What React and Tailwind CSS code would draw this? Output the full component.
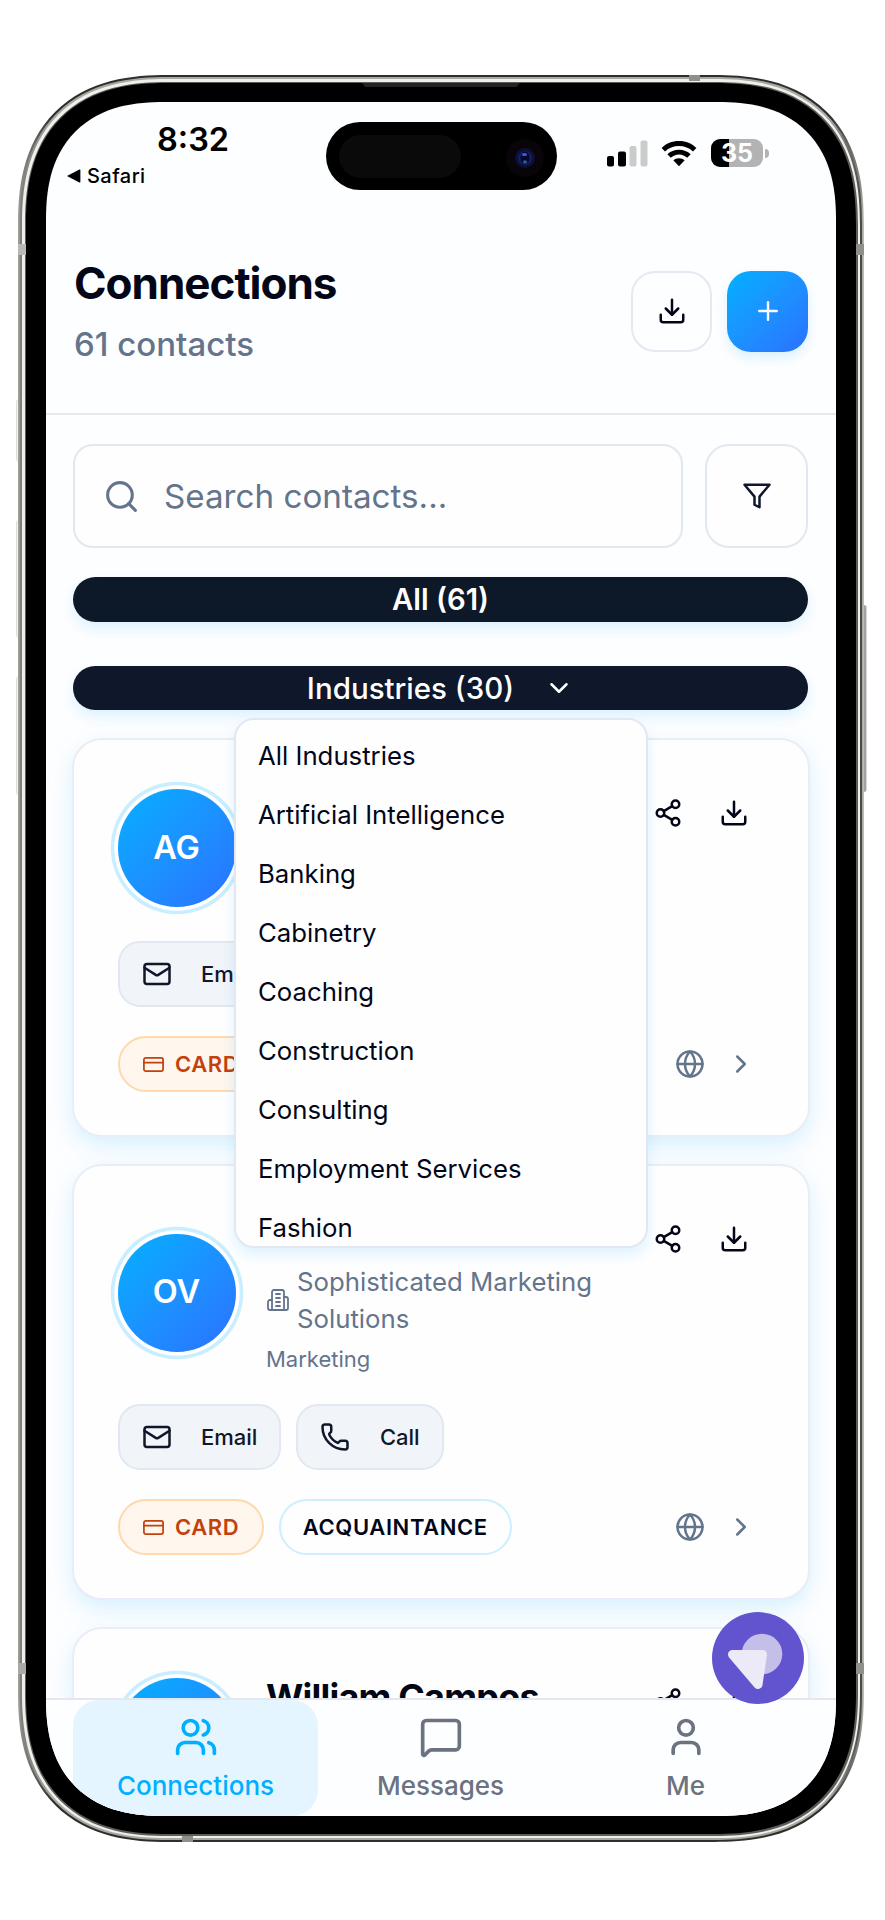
import React from "react";
import {
  ChevronDown,
  ChevronRight,
  CreditCard,
  Download,
  Globe,
  Mail,
  MessageSquare,
  Phone,
  Plus,
  Search,
  Share2,
  User,
  Users,
} from "lucide-react";

const industries = [
  "All Industries",
  "Artificial Intelligence",
  "Banking",
  "Cabinetry",
  "Coaching",
  "Construction",
  "Consulting",
  "Employment Services",
  "Fashion",
];

function BuildingIcon() {
  return (
    <svg
      className="shrink-0"
      width="24"
      height="24"
      viewBox="0 0 24 24"
      fill="none"
      stroke="currentColor"
      strokeWidth="1.8"
      strokeLinecap="round"
      strokeLinejoin="round"
    >
      <path d="M6 22V4a2 2 0 0 1 2-2h8a2 2 0 0 1 2 2v18Z" />
      <path d="M6 12H4a2 2 0 0 0-2 2v6a2 2 0 0 0 2 2h2" />
      <path d="M18 9h2a2 2 0 0 1 2 2v9a2 2 0 0 1-2 2h-2" />
      <path d="M10 6h4M10 10h4M10 14h4M10 18h4" />
    </svg>
  );
}

function StatusBar() {
  return (
    <div className="relative h-[130px] shrink-0">
      <div className="flex h-full justify-between">
        <div className="w-[200px]">
          <div className="mt-[18px] pl-[111px] text-[32.500px] leading-[40px] font-semibold text-black">8:32</div>
          <div className="mt-[1.500px] flex items-center gap-[6px] pl-[21px] text-[20px] leading-[28px] font-medium tracking-[0.450px] text-black">
            <svg width="14" height="14" viewBox="0 0 14 14">
              <path d="M0 7 12.4 .6Q13.4.3 13.4 1.4V12.6Q13.4 13.7 12.4 13.4Z" />
            </svg>
            Safari
          </div>
        </div>
        <div className="mt-[37px] mr-[67.500px] flex h-[28px] items-center">
          <svg width="41" height="27" viewBox="0 0 41 27">
            <rect x="0" y="16" width="7" height="10.5" rx="2" />
            <rect x="11" y="11.5" width="8" height="15" rx="2" />
            <rect x="22.5" y="6" width="7" height="20.5" rx="2" fill="#cbcbcb" />
            <rect x="33.5" y="0.5" width="7" height="26" rx="2" fill="#cbcbcb" />
          </svg>
          <svg className="ml-[13px]" width="36" height="27" viewBox="0 0 36 27">
            <path d="M18 1C11 1 5 3.6.6 8l3.4 3.5C7.7 7.9 12.600 6 18 6s10.300 1.900 14 5.500L35.400 8C31 3.600 25 1 18 1Z" />
            <path d="M18 9.700c-4.500 0-8.600 1.700-11.700 4.500l3.500 3.500c2.200-1.900 5-3.200 8.200-3.200s6 1.300 8.200 3.200l3.500-3.500C26.600 11.400 22.500 9.700 18 9.700Z" />
            <path d="M18 18.200c-2.200 0-4.200.8-5.700 2.100L18 26.300l5.700-6c-1.500-1.300-3.500-2.100-5.700-2.100Z" />
          </svg>
          <div className="ml-[14px] flex h-[28px] w-[52px] items-center justify-center rounded-[9px] bg-[linear-gradient(90deg,#000_35%,#b3b3b3_35%)] text-[25px] leading-[28px] font-bold text-white">
            35
          </div>
          <div className="ml-[1.500px] h-[9px] w-[4px] rounded-r-full bg-[#b3b3b3]" />
        </div>
      </div>
      <div className="absolute top-[20px] left-[280px] flex h-[68px] w-[231px] items-center justify-between rounded-full bg-black pr-[13px] pl-[13px]">
        <div className="h-[43px] w-[122px] rounded-full bg-[#0a0a0a]" />
        <div className="mt-1 flex size-[38px] items-center justify-center rounded-full bg-[#08040a]">
          <svg width="20" height="20" viewBox="0 0 20 20">
            <circle cx="10" cy="10" r="10" fill="#0b1136" />
            <circle cx="10" cy="10" r="7" fill="#141f66" />
            <ellipse cx="10" cy="10" rx="4.500" ry="6.500" fill="#060a28" />
            <ellipse cx="9.500" cy="6.500" rx="2.600" ry="1.500" fill="#4a5ad0" />
            <ellipse cx="10" cy="14" rx="2.200" ry="1.800" fill="#2a5a98" />
          </svg>
        </div>
      </div>
    </div>
  );
}

function Header() {
  return (
    <header className="flex h-[183px] shrink-0 items-center justify-between border-b-2 border-[#e6e8f0] pr-[28px] pb-[23px] pl-[28px]">
      <div className="flex flex-col gap-[15px]">
        <h1 className="text-[44px] leading-[51px] font-bold tracking-[-1px] text-[#020617]">Connections</h1>
        <p className="text-[33px] leading-[40px] font-medium text-[#64748b]">61 contacts</p>
      </div>
      <div className="flex gap-[15px]">
        <button className="flex size-[81px] items-center justify-center rounded-[24px] border-2 border-[#e6e8f2] bg-[#fdfeff] text-[#020617]">
          <Download size={30} />
        </button>
        <button className="flex size-[81px] items-center justify-center rounded-[24px] bg-linear-to-br from-[#00b0ff] to-[#2b70ff] text-white shadow-[0_6px_12px_rgba(0,160,255,0.14)]">
          <Plus size={30} strokeWidth={1.9} />
        </button>
      </div>
    </header>
  );
}

function SearchRow() {
  return (
    <div className="flex gap-[22px]">
      <div className="flex h-[104px] flex-1 items-center rounded-[20px] border-2 border-[#e3e7f0] bg-[#fefeff] pl-[28px] text-[#64748b]">
        <Search size={37} />
        <span className="mt-[2px] ml-[24px] text-[33.200px]">Search contacts...</span>
      </div>
      <button className="flex h-[104px] w-[103px] items-center justify-center rounded-[24px] border-2 border-[#e3e7f0] bg-[#fefeff]">
        <svg width="30" height="30" viewBox="0 0 24 24" fill="none" stroke="#0f172a" strokeWidth="2">
          <path d="M22 3H2l8 9.460V19l4 2v-8.540L22 3Z" strokeLinejoin="round" />
        </svg>
      </button>
    </div>
  );
}

function Filters() {
  return (
    <>
      <button className="mt-[29px] flex h-[45px] shrink-0 items-center justify-center rounded-full bg-[#0d1829] text-[29.300px] leading-[45px] font-semibold text-white shadow-[0_7px_14px_rgba(0,160,255,0.13)]">
        All (61)
      </button>
      <div className="relative mt-[44px] shrink-0">
        <button className="flex h-[44px] w-full items-center justify-center gap-[30px] rounded-full bg-[#0f172a] text-[29.500px] leading-[45px] font-medium text-white shadow-[0_7px_14px_rgba(0,160,255,0.13)]">
          Industries (30)
          <ChevronDown size={30} />
        </button>
        <ul className="absolute top-[52px] left-[161px] z-10 h-[530px] w-[413.500px] overflow-hidden rounded-[20px] border-2 border-[#e2e8f0] bg-[#fefeff] px-[22px] pt-[6px] text-[25.750px] leading-[59px] text-[#020617] shadow-[0_7px_14px_rgba(0,160,255,0.13)]">
          {industries.map((name) => (
            <li key={name}>{name}</li>
          ))}
        </ul>
      </div>
    </>
  );
}

function Avatar({ initials }) {
  return (
    <div className="flex size-[118px] shrink-0 items-center justify-center rounded-full bg-linear-to-br from-[#00b0ff] to-[#2b70ff] text-[32.500px] font-semibold text-white shadow-[0_0_0_3.700px_#fff,0_0_0_7.300px_#c9eeff]">
      {initials}
    </div>
  );
}

function ActionButton({ icon: Icon, label }) {
  return (
    <button className="flex h-[66px] items-center gap-[29.500px] rounded-[22px] border-2 border-[#e2e8f0] bg-[#f1f4f9] pr-[22px] pl-[22px] text-[22px] font-medium text-[#0f172a]">
      <Icon size={30} />
      {label}
    </button>
  );
}

function ContactCard({ initials, info, phone, tag }) {
  return (
    <article className="mx-[-1.500px] shrink-0 rounded-[30px] border-2 border-[#e9edf5] bg-[#fefeff] px-[44px] py-[43px] shadow-[0_10px_30px_rgba(0,170,255,0.1),0_7px_14px_rgba(0,170,255,0.06)]">
      <div className="flex items-center">
        <Avatar initials={initials} />
        <div className="ml-[30.500px] flex-1">{info}</div>
        <div className="flex gap-[6px] self-start text-[#020617]">
          <button className="flex size-[60px] items-center justify-center">
            <Share2 size={30} />
          </button>
          <button className="flex size-[60px] items-center justify-center">
            <Download size={30} />
          </button>
        </div>
      </div>
      <div className="mt-[28px] flex gap-[15px]">
        <ActionButton icon={Mail} label="Email" />
        {phone && <ActionButton icon={Phone} label="Call" />}
      </div>
      <div className="mt-[29px] flex items-center">
        <span className="flex h-[56px] items-center gap-[10.500px] rounded-full border-2 border-[#fed9ae] bg-[#fff6ed] pr-[22.500px] pl-[22px] text-[22px] font-semibold tracking-[0.600px] text-[#c2410c]">
          <CreditCard size={23} strokeWidth={1.800} />
          CARD
        </span>
        {tag && (
          <span className="ml-[15px] flex h-[56px] items-center rounded-full border-2 border-[#cdefff] px-[22px] text-[22px] font-semibold tracking-[0.600px] text-[#020617]">
            {tag}
          </span>
        )}
        <div className="mr-[7.500px] ml-auto flex items-center gap-[21px] text-[#64748b]">
          <Globe size={30} />
          <ChevronRight size={30} />
        </div>
      </div>
    </article>
  );
}

function Tab({ icon: Icon, label, active }) {
  return (
    <a
      className={
        active
          ? "flex flex-1 flex-col items-center rounded-[26px] bg-[#e5f5ff] pt-[15px] text-[#00b0ff]"
          : "flex flex-1 flex-col items-center pt-[15px] text-[#6b7280]"
      }
    >
      <Icon size={44} />
      <span className="mt-[8.500px] text-[26px] leading-[36px] font-medium">{label}</span>
    </a>
  );
}

function Device({ children }) {
  return (
    <div className="relative mt-[75px] ml-[18px] h-[1767px] w-[846px]">
      <div className="absolute top-[324px] -left-[2.500px] h-[63px] w-[4px] rounded-l-[3px] border border-[#dededb] bg-[#f4f4f2]" />
      <div className="absolute top-[445px] -left-[2.500px] h-[118px] w-[4px] rounded-l-[3px] border border-[#dededb] bg-[#f4f4f2]" />
      <div className="absolute top-[601px] -left-[2.500px] h-[119px] w-[4px] rounded-l-[3px] border border-[#dededb] bg-[#f4f4f2]" />
      <div className="absolute top-[530px] -right-[3px] h-[187px] w-[4px] rounded-r-[3px] border-r border-[#d8d6d4] bg-[#a5a3a1]" />
      <div className="relative h-full rounded-[150px] bg-[linear-gradient(90deg,#a3a39e,#8a8a86_0.4%,#2e2e2c_4%,#2e2e2c_96%,#8c8a88_99.6%,#c4c1be)] p-[2px] [corner-shape:superellipse(1.29)]">
        <div className="h-full rounded-[148px] bg-[linear-gradient(90deg,#7d7d79,#a8a8a3_4%,#a8a8a3_96%,#4a4846)] p-[2px] [corner-shape:superellipse(1.29)]">
          <div className="h-full rounded-[146px] bg-[#efefec] p-[2.500px] [corner-shape:superellipse(1.29)]">
            <div className="h-full rounded-[143px] bg-[#5c5c59] p-[1.500px] [corner-shape:superellipse(1.29)]">
              <div className="h-full rounded-[142px] bg-black px-[20px] pt-[19px] pb-[18px] [corner-shape:superellipse(1.29)]">
                {children}
              </div>
            </div>
          </div>
        </div>
        <div className="absolute top-[169px] left-0 h-[11px] w-[8px] bg-[#b9b9b5]" />
        <div className="absolute top-[169px] right-0 h-[11px] w-[8px] bg-[#8f8f8c]" />
        <div className="absolute top-[1588px] left-0 h-[11px] w-[8px] bg-[#a9a9a5]" />
        <div className="absolute top-[1588px] right-0 h-[11px] w-[8px] bg-[#8f8f8c]" />
        <div className="absolute top-0 left-[671px] h-[6px] w-[11px] bg-[#8f8f8c]" />
        <div className="absolute bottom-0 left-[164px] h-[6px] w-[11px] bg-[#8f8f8c]" />
        <div className="absolute top-[8px] left-[344px] h-[4px] w-[158px] bg-[#232323] [clip-path:polygon(0_0,100%_0,98%_100%,2%_100%)]" />
      </div>
    </div>
  );
}

export default function App() {
  return (
    <div className="flow-root h-[1920px] w-[885px] overflow-hidden bg-white font-['Inter',sans-serif]">
      <Device>
        <div className="relative flex h-full flex-col overflow-hidden rounded-[118px] bg-[#fdfeff] [corner-shape:superellipse(1.27)]">
          <StatusBar />
          <Header />
          <main className="flex min-h-0 flex-1 flex-col overflow-hidden pt-[29px] pr-[28px] pl-[27px]">
            <SearchRow />
            <Filters />
            <div className="mt-[28px] flex flex-col gap-[27px]">
              <ContactCard initials="AG" info={<div className="h-[130px]" />} />
              <ContactCard
                initials="OV"
                phone
                tag="ACQUAINTANCE"
                info={
                  <div className="h-[167px] w-[340px] pt-[54px] text-[#64748b]">
                    <div className="flex items-center gap-[7px] text-[25.750px] leading-[37px]">
                      <BuildingIcon />
                      <span>Sophisticated Marketing Solutions</span>
                    </div>
                    <div className="mt-[5.500px] text-[22px] leading-[33px]">Marketing</div>
                  </div>
                }
              />
              <ContactCard
                initials=""
                info={
                  <div className="h-[130px]">
                    <h2 className="text-[36px] leading-[50px] font-bold tracking-[-0.800px] whitespace-nowrap text-[#020617]">
                      William Campos
                    </h2>
                  </div>
                }
              />
            </div>
          </main>
          <nav className="relative flex h-[118px] shrink-0 border-t-2 border-[#e5e7ee] bg-[#fdfeff] pr-[28px] pl-[27px]">
            <Tab icon={Users} label="Connections" active />
            <Tab icon={MessageSquare} label="Messages" />
            <Tab icon={User} label="Me" />
          </nav>
          <button className="absolute right-[32px] bottom-[112px] z-20 size-[92px] rounded-full bg-[#6254cf]">
            <svg width="92" height="92" viewBox="0 0 92 92">
              <circle cx="50" cy="42" r="20.300" fill="#c3bfe8" />
              <path
                d="M20.500 42.500H50.500L46 72.500Z"
                fill="#ebeaf6"
                stroke="#ebeaf6"
                strokeWidth="9"
                strokeLinejoin="round"
              />
            </svg>
          </button>
        </div>
      </Device>
    </div>
  );
}
